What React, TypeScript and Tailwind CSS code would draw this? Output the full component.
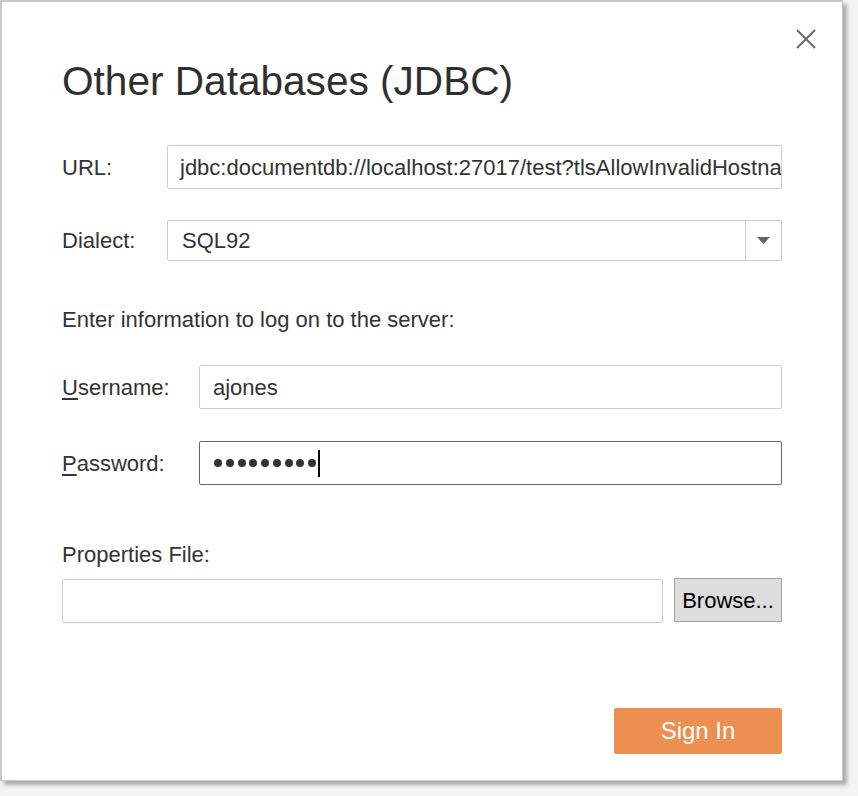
import React from "react";

const font = { fontFamily: '"Liberation Sans", Arial, sans-serif' };

export default function App() {
  return (
    <div className="min-h-[796px] w-full bg-[#f4f4f4]" style={font}>
      <div className="relative box-border w-[843px] h-[781px] bg-white border-l-2 border-t-2 border-r border-b border-[#c9c9c9] shadow-[4px_4px_4px_rgba(0,0,0,0.3)] pl-[60px] pr-[60px] pt-[59px] text-[#333333]">
        <button className="absolute left-[793px] top-[26px] w-[22px] h-[22px] flex items-center justify-center">
          <svg width="22" height="22" viewBox="0 0 22 22">
            <path d="M2 2 L20 20 M20 2 L2 20" stroke="#6a6a6a" strokeWidth="2" fill="none" />
          </svg>
        </button>

        <h1 className="text-[40.6px] leading-[40px] text-[#2f2f2f] m-0">Other Databases (JDBC)</h1>

        <div className="mt-[44px] flex items-center h-[44px]">
          <div className="w-[105px] text-[22px]">URL:</div>
          <div className="flex-1 h-[44px] border border-[#cccccc] rounded-[2px] pl-[12px] flex items-center overflow-hidden whitespace-nowrap text-[22px] text-[#333]">
            jdbc:documentdb://localhost:27017/test?tlsAllowInvalidHostnames=true
          </div>
        </div>

        <div className="mt-[31px] flex items-center h-[41px]">
          <div className="w-[105px] text-[22px]">Dialect:</div>
          <div className="flex-1 h-[41px] border border-[#cccccc] rounded-[2px] flex items-stretch">
            <div className="flex-1 pl-[14px] flex items-center text-[22px]">SQL92</div>
            <div className="w-[36px] border-l border-[#cccccc] flex items-center justify-center">
              <svg width="13" height="7" viewBox="0 0 13 7">
                <path d="M0 0 L13 0 L6.5 7 Z" fill="#666666" />
              </svg>
            </div>
          </div>
        </div>

        <div className="mt-[45px] h-[28px] leading-[28px] text-[22px]">Enter information to log on to the server:</div>

        <div className="mt-[31px] flex items-center h-[44px]">
          <div className="w-[137px] text-[22px]">
            <span className="underline underline-offset-[3px]">U</span>sername:
          </div>
          <div className="flex-1 h-[44px] border border-[#cccccc] rounded-[2px] pl-[13px] flex items-center text-[22px]">ajones</div>
        </div>

        <div className="mt-[32px] flex items-center h-[44px]">
          <div className="w-[137px] text-[22px]">
            <span className="underline underline-offset-[3px]">P</span>assword:
          </div>
          <div className="flex-1 h-[44px] border border-[#666666] rounded-[2px] pl-[14px] flex items-center">
            <div className="flex items-center gap-[3.75px]">
              {Array.from({ length: 9 }).map((_, i) => (
                <div key={i} className="w-[8px] h-[8px] rounded-full bg-[#333333]" />
              ))}
            </div>
            <div className="ml-[2px] w-[2px] h-[27px] bg-black" />
          </div>
        </div>

        <div className="mt-[56px] h-[28px] leading-[28px] text-[22px]">Properties File:</div>

        <div className="mt-[9px] flex items-start h-[45px]">
          <div className="mt-[1px] w-[601px] h-[44px] border border-[#cccccc] rounded-[2px]" />
          <button className="ml-[11px] w-[108px] h-[44px] bg-[#dddddd] border border-[#a3a3a3] text-[22px] text-black flex items-center justify-center">
            Browse...
          </button>
        </div>

        <div className="mt-[85px] flex justify-end">
          <button className="w-[168px] h-[46px] rounded-[2px] bg-[#ec8f51] text-white text-[24px] flex items-center justify-center">
            Sign In
          </button>
        </div>
      </div>
    </div>
  );
}
